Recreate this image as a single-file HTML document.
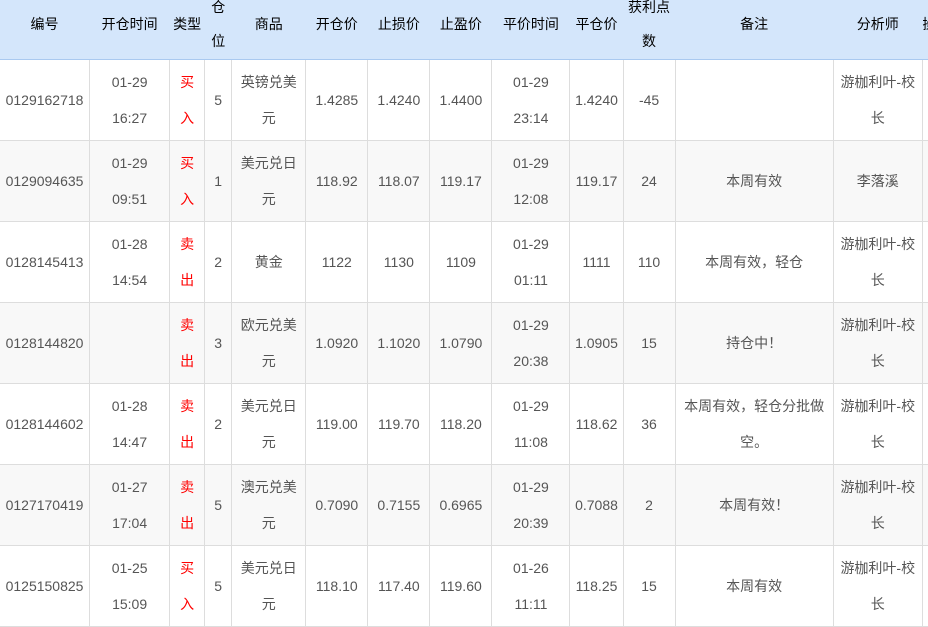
<!DOCTYPE html>
<html><head><meta charset="utf-8"><style>
body{margin:0;background:#fff;width:928px;height:610px;overflow:hidden;font-family:"Liberation Sans","Noto Sans CJK SC",sans-serif;font-size:14px;color:#555}
table{border-collapse:collapse;table-layout:fixed;width:1000px;position:absolute;left:-1px;top:0}
th{background:#d4e6fb;color:#000;font-weight:normal;border:none;border-bottom:1px solid #a9c9f0;padding:0;height:59px;vertical-align:top}
th div{height:47px;display:flex;align-items:center;justify-content:center;text-align:center;line-height:34px;white-space:nowrap}
td{border:1px solid #ddd;padding:0;height:80px;vertical-align:top}
td div{height:80px;display:flex;align-items:center;justify-content:center;text-align:center;line-height:36px;white-space:nowrap}
tr.g td{background:#f8f8f8}
.r{color:#f00}
</style></head><body>
<table>
<colgroup><col style="width:90px"><col style="width:80px"><col style="width:35px"><col style="width:27px"><col style="width:74px"><col style="width:62px"><col style="width:62px"><col style="width:62px"><col style="width:78px"><col style="width:53px"><col style="width:52px"><col style="width:158px"><col style="width:89px"><col style="width:76px"></colgroup>
<tr><th><div>编号</div></th><th><div>开仓时间</div></th><th><div>类型</div></th><th><div>仓<br>位</div></th><th><div>商品</div></th><th><div>开仓价</div></th><th><div>止损价</div></th><th><div>止盈价</div></th><th><div>平价时间</div></th><th><div>平仓价</div></th><th><div>获利点<br>数</div></th><th><div>备注</div></th><th><div>分析师</div></th><th><div style="justify-content:flex-start">操作</div></th></tr>
<tr><td><div>0129162718</div></td><td><div>01-29<br>16:27</div></td><td><div class="r">买<br>入</div></td><td><div>5</div></td><td><div>英镑兑美<br>元</div></td><td><div>1.4285</div></td><td><div>1.4240</div></td><td><div>1.4400</div></td><td><div>01-29<br>23:14</div></td><td><div>1.4240</div></td><td><div>-45</div></td><td><div></div></td><td><div>游枷利叶-校<br>长</div></td><td><div></div></td></tr>
<tr class="g"><td><div>0129094635</div></td><td><div>01-29<br>09:51</div></td><td><div class="r">买<br>入</div></td><td><div>1</div></td><td><div>美元兑日<br>元</div></td><td><div>118.92</div></td><td><div>118.07</div></td><td><div>119.17</div></td><td><div>01-29<br>12:08</div></td><td><div>119.17</div></td><td><div>24</div></td><td><div>本周有效</div></td><td><div>李落溪</div></td><td><div></div></td></tr>
<tr><td><div>0128145413</div></td><td><div>01-28<br>14:54</div></td><td><div class="r">卖<br>出</div></td><td><div>2</div></td><td><div>黄金</div></td><td><div>1122</div></td><td><div>1130</div></td><td><div>1109</div></td><td><div>01-29<br>01:11</div></td><td><div>1111</div></td><td><div>110</div></td><td><div>本周有效，轻仓</div></td><td><div>游枷利叶-校<br>长</div></td><td><div></div></td></tr>
<tr class="g"><td><div>0128144820</div></td><td><div></div></td><td><div class="r">卖<br>出</div></td><td><div>3</div></td><td><div>欧元兑美<br>元</div></td><td><div>1.0920</div></td><td><div>1.1020</div></td><td><div>1.0790</div></td><td><div>01-29<br>20:38</div></td><td><div>1.0905</div></td><td><div>15</div></td><td><div>持仓中！</div></td><td><div>游枷利叶-校<br>长</div></td><td><div></div></td></tr>
<tr><td><div>0128144602</div></td><td><div>01-28<br>14:47</div></td><td><div class="r">卖<br>出</div></td><td><div>2</div></td><td><div>美元兑日<br>元</div></td><td><div>119.00</div></td><td><div>119.70</div></td><td><div>118.20</div></td><td><div>01-29<br>11:08</div></td><td><div>118.62</div></td><td><div>36</div></td><td><div>本周有效，轻仓分批做<br>空。</div></td><td><div>游枷利叶-校<br>长</div></td><td><div></div></td></tr>
<tr class="g"><td><div>0127170419</div></td><td><div>01-27<br>17:04</div></td><td><div class="r">卖<br>出</div></td><td><div>5</div></td><td><div>澳元兑美<br>元</div></td><td><div>0.7090</div></td><td><div>0.7155</div></td><td><div>0.6965</div></td><td><div>01-29<br>20:39</div></td><td><div>0.7088</div></td><td><div>2</div></td><td><div>本周有效！</div></td><td><div>游枷利叶-校<br>长</div></td><td><div></div></td></tr>
<tr><td><div>0125150825</div></td><td><div>01-25<br>15:09</div></td><td><div class="r">买<br>入</div></td><td><div>5</div></td><td><div>美元兑日<br>元</div></td><td><div>118.10</div></td><td><div>117.40</div></td><td><div>119.60</div></td><td><div>01-26<br>11:11</div></td><td><div>118.25</div></td><td><div>15</div></td><td><div>本周有效</div></td><td><div>游枷利叶-校<br>长</div></td><td><div></div></td></tr>
</table>
</body></html>
